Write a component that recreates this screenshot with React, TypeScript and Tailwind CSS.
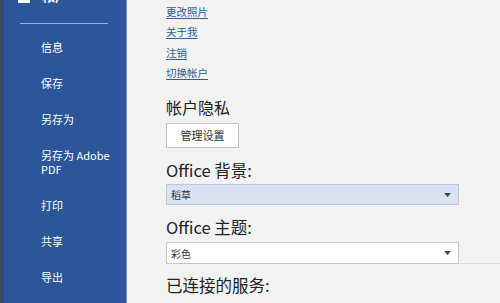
import React from "react";

const menu = ["信息", "保存", "另存为", "另存为 Adobe PDF", "打印", "共享", "导出"];
const links = ["更改照片", "关于我", "注销", "切换帐户"];

function Caret() {
  return (
    <svg width="7" height="4" viewBox="0 0 7 4" className="fill-[#444]">
      <path d="M0 0h7L3.5 4z" />
    </svg>
  );
}

export default function App() {
  return (
    <div
      className="flex w-[500px] h-[303px] overflow-hidden bg-[#f2f2f3]"
      style={{ fontFamily: '"Noto Sans CJK SC", "Noto Sans", sans-serif' }}
    >
      {/* left backstage nav */}
      <div className="flex w-[127px] shrink-0 bg-[#2b579a]">
        <div className="w-[4px] bg-[#3d4c68]" />
        <div className="flex-1 flex flex-col">
          <div className="flex items-end gap-3 h-[16px] -mt-[12px] pl-[14px] text-white text-[13px] leading-[16px]">
            <div className="w-[12px] h-[3px] bg-white mb-[1px]" />
            <span className="font-bold">帐户</span>
          </div>
          <div className="mt-[19px] ml-[16px] mr-[18px] h-px bg-[#8fb0e0]" />
          <ul className="mt-[16px] flex flex-col gap-[22px] pl-[37px] text-white text-[11px] leading-[14px]">
            {menu.map((m) => (
              <li key={m} className="w-[76px]">
                {m}
              </li>
            ))}
          </ul>
        </div>
        <div className="w-px bg-[#6f8fc0]" />
      </div>

      {/* right content */}
      <div className="flex-1 pl-[39px] pt-[2px] text-[#333]">
        <div className="flex flex-col">
          {links.map((l) => (
            <a
              key={l}
              className="text-[10.5px] leading-[20.3px] text-[#30608e] underline underline-offset-2 w-fit"
            >
              {l}
            </a>
          ))}
        </div>

        <div className="mt-[14px] text-[16px] leading-[20px] text-[#222]">帐户隐私</div>
        <button className="mt-[6px] w-[73px] h-[25px] border border-[#c6c6c6] bg-white text-[11px] text-[#333]">
          管理设置
        </button>

        <div className="mt-[12px] text-[16.5px] leading-[20px] text-[#222]">
          Office 背景:
        </div>
        <div className="mt-[4px] w-[293px] h-[21px] flex items-center justify-between px-[4px] pr-[7px] border border-[#b9c8de] bg-[#d8e3f3] text-[10px] text-[#333]">
          <span>稻草</span>
          <Caret />
        </div>

        <div className="mt-[12px] text-[16.5px] leading-[20px] text-[#222]">
          Office 主题:
        </div>
        <div className="mt-[5px] flex items-end">
          <div className="w-[293px] h-[22px] flex items-center justify-between px-[4px] pr-[7px] border border-[#c6c6c6] bg-white text-[10px] text-[#333]">
            <span>彩色</span>
            <Caret />
          </div>
          <div className="flex-1 h-px bg-[#dcdcdc]" />
        </div>

        <div className="mt-[11px] text-[16.5px] leading-[20px] text-[#222]">已连接的服务:</div>
      </div>
    </div>
  );
}
